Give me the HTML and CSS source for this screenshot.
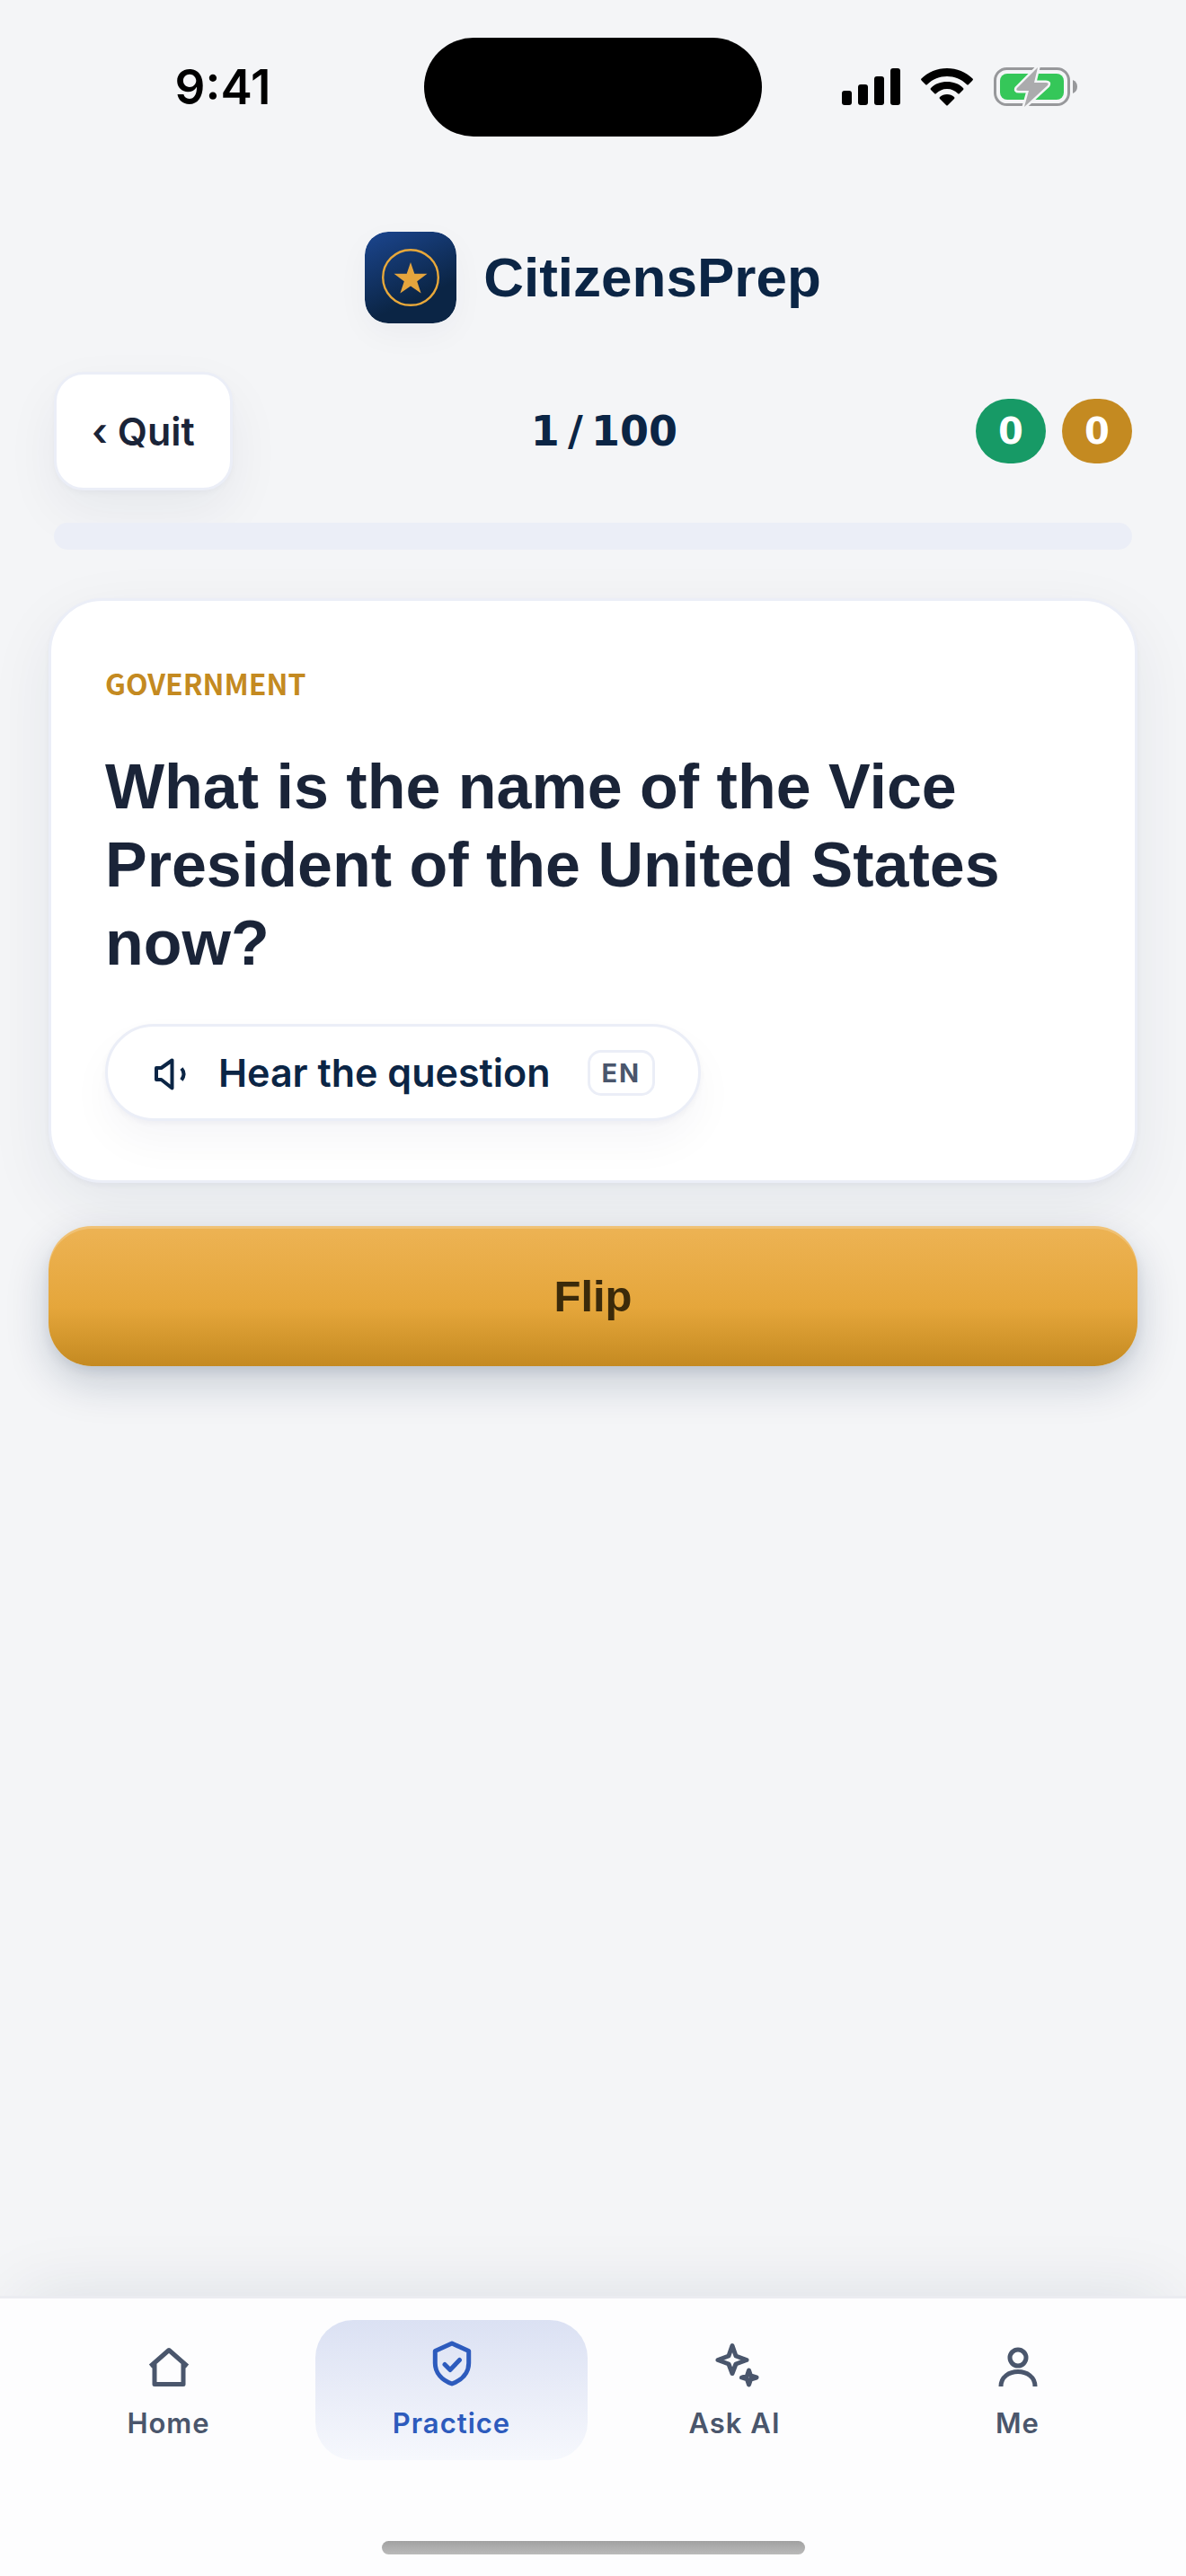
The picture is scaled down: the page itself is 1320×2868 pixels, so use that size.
FILE: index.html
```html
<!DOCTYPE html>
<html lang="en">
<head>
<meta charset="utf-8">
<meta name="viewport" content="width=device-width, initial-scale=1">
<title>CitizensPrep</title>
<link rel="stylesheet" href="styles.css">
</head>
<body>
<div class="status">
  <span class="status-time">9:41</span>
  <span class="island"></span>
  <div class="status-icons">
    <svg width="65" height="42" viewBox="0 0 65 42"><rect x="0" y="25" width="11" height="16" rx="3"/><rect x="18" y="18" width="11" height="23" rx="3"/><rect x="36" y="9" width="11" height="32" rx="3"/><rect x="54" y="0" width="11" height="41" rx="3"/></svg>
    <svg width="58" height="42" viewBox="0 0 58 42"><path d="M29 0C40 0 50 4 58 12Q58 13 57 14L53 18Q52 19 51 18C45 12 37 9 29 9S13 12 7 18Q6 19 5 18L1 14Q0 13 0 12C8 4 18 0 29 0Z"/><path d="M29 15C36 15 42 17 47 22Q48 23 47 24L43 28Q42 29 41 28C38 25 34 23 29 23S20 25 17 28Q16 29 15 28L11 24Q10 23 11 22C16 17 22 15 29 15Z"/><path d="M29 29C32 29 35 30 37 32Q38 33 37 34L30 41Q29 42 28 41L21 34Q20 33 21 32C23 30 26 29 29 29Z"/></svg>
    <svg width="94" height="46" viewBox="0 0 94 46"><rect x="1.500" y="2.500" width="82" height="40" rx="13" fill="none" stroke="#97989b" stroke-width="3"/><rect x="7" y="8" width="71" height="29" rx="8" fill="#35c759"/><path d="M88 15q5 2 5 7.500t-5 7.500z" fill="#97989b"/><path d="M49 1L26 24q-2 3 2 3h11l-5 18L60 21q2-3-2-3H45z" fill="#ababad" stroke="#f4f5f7" stroke-width="5" paint-order="stroke"/></svg>
  </div>
</div>

<main class="screen">
  <header class="brand">
    <svg class="brand-mark" viewBox="0 0 102 102">
      <defs><linearGradient id="navy" x1="0.200" y1="0" x2="0.650" y2="1"><stop offset="0" stop-color="#1a4389"/><stop offset="0.750" stop-color="#0b2545"/></linearGradient></defs>
      <rect width="102" height="102" rx="26" fill="url(#navy)"/>
      <circle cx="51" cy="51" r="30.800" fill="none" stroke="#e8a83a" stroke-width="2.400"/>
      <path d="M51 34l4.300 12.700H69.500L58.200 55.200l4.400 13.300L51 60.500 39.400 68.500l4.400-13.300L32.500 46.700H46.700z" fill="#e5a53d"/>
    </svg>
    <span class="brand-name">CitizensPrep</span>
  </header>

  <div class="session">
    <button class="quit" type="button">‹ Quit</button>
    <span class="count">1&thinsp;/&thinsp;100</span>
    <div class="scores"><span class="score score-right">0</span><span class="score score-review">0</span></div>
  </div>
  <div class="progress" role="progressbar" aria-label="Questions answered" aria-valuenow="0" aria-valuemin="0" aria-valuemax="100"></div>

  <section class="card">
    <p class="topic">GOVERNMENT</p>
    <h1 class="question">What is the name of the Vice President of the United States now?</h1>
    <button class="hear" type="button">
      <svg width="48" height="48" viewBox="0 0 48 48" fill="none" stroke="currentColor" stroke-width="4" stroke-linejoin="round"><path d="M6 19h5.500L23.500 10.500v31L11.500 32H6z"/><path d="M34 19.500q5 6 0 13"/></svg>
      <span>Hear the question</span>
      <span class="lang">EN</span>
    </button>
  </section>

  <button class="flip" type="button">Flip</button>
</main>

<nav class="tabs">
  <div class="tab-row">
    <a class="tab" href="#home"><svg viewBox="0 0 60 60"><path d="M9.500 33.500L30 15.500l20.500 18M14 30v23.500h32V30"/></svg>Home</a>
    <a class="tab tab-active" href="#practice" aria-current="page"><svg viewBox="0 0 60 60"><path d="M30 8l18.700 8.500V30C48.700 41 41 49 30 53 19 49 11.300 41 11.300 30V16.500z"/><path d="M22 31.500l6 6L38.500 26.500"/></svg>Practice</a>
    <a class="tab" href="#ask"><svg viewBox="0 0 60 60"><path d="M27 10.500l4 11.500 12 4.500-12 4.500-4 10.500-4-10.500-12-4.500 12-4.500z"/><path d="M45.500 38l2 6 6.500 2-6.500 2-2 6-2-6-6-2 6-2z"/></svg>Ask AI</a>
    <a class="tab" href="#me"><svg viewBox="0 0 60 60"><circle cx="30" cy="24" r="9"/><path d="M11 56C11 34 49 34 49 56"/></svg>Me</a>
  </div>
  <div class="home-bar"></div>
</nav>
</body>
</html>
```
FILE: styles.css
```css
:root {
  --bg: #f4f5f7;
  --line: #ebeef7;
  --navy: #0b2545;
  --ink: #1a2438;
  --muted: #4a566c;
  --gold: #c48a21;
  --ui: Inter, "Liberation Sans", sans-serif;
  --display: "Liberation Sans", Arial, sans-serif;
  --label: "Noto Sans CJK SC", "Noto Sans", sans-serif;
  --digits: "DejaVu Sans", sans-serif;
}

* { box-sizing: border-box; }

body {
  margin: 0;
  min-height: 100vh;
  display: flex;
  flex-direction: column;
  background: var(--bg);
  color: var(--ink);
  font-family: var(--ui);
}

button { font: inherit; color: inherit; cursor: pointer; }

/* Status bar */
.status {
  display: grid;
  grid-template-columns: 1fr 376px 1fr;
  align-items: center;
  padding-top: 42px;
}
.status-time {
  padding-left: 24px;
  text-align: center;
  font-size: 53px;
  line-height: 60px;
  font-weight: 600;
  color: #000;
}
.island { height: 110px; border-radius: 56px; background: #000; }
.status-icons {
  display: flex;
  align-items: center;
  justify-content: center;
  gap: 23px;
  padding-right: 32px;
}

/* Page */
.screen {
  flex: 1;
  display: flex;
  flex-direction: column;
  padding: 106px 54px 0;
}

.brand {
  display: flex;
  align-items: center;
  justify-content: center;
  gap: 30px;
}
.brand-mark {
  width: 102px;
  height: 102px;
  border-radius: 26px;
  box-shadow: 0 12px 36px rgba(11, 37, 69, 0.04);
}
.brand-name {
  font-family: var(--display);
  font-size: 62px;
  line-height: 72px;
  font-weight: 700;
  color: var(--navy);
}

.session {
  display: flex;
  align-items: center;
  justify-content: space-between;
  margin: 54px 6px 0;
}
.quit {
  height: 132px;
  padding: 0 39px;
  border: 3px solid var(--line);
  border-radius: 33px;
  background: #fff;
  font-size: 43px;
  line-height: 48px;
  font-weight: 600;
  box-shadow: 0 3px 6px rgba(11, 37, 69, 0.03), 0 24px 60px rgba(11, 37, 69, 0.06);
}
.count {
  font-family: var(--digits);
  font-size: 46px;
  line-height: 60px;
  font-weight: 700;
  color: var(--navy);
}
.scores { display: flex; gap: 18px; }
.score {
  width: 78px;
  height: 72px;
  border-radius: 36px;
  text-align: center;
  font-family: var(--digits);
  font-size: 40px;
  line-height: 72px;
  font-weight: 700;
  color: #fff;
}
.score-right { background: #179a66; }
.score-review { background: var(--gold); }

.progress {
  height: 30px;
  margin: 36px 6px 0;
  border-radius: 15px;
  background: var(--line);
}

.card {
  margin-top: 54px;
  padding: 65px 60px 66px;
  border: 3px solid var(--line);
  border-radius: 60px;
  background: #fff;
  box-shadow: 0 3px 6px rgba(11, 37, 69, 0.04), 0 24px 72px rgba(11, 37, 69, 0.07);
}
.topic {
  margin: 0;
  font-family: var(--label);
  font-size: 32px;
  line-height: 52px;
  font-weight: 700;
  color: var(--gold);
}
.question {
  margin: 47px 0 0;
  font-family: var(--display);
  font-size: 70px;
  line-height: 87px;
  font-weight: 700;
}
.hear {
  display: inline-flex;
  align-items: center;
  height: 108px;
  margin-top: 46px;
  padding: 0 48px;
  border: 3px solid var(--line);
  border-radius: 54px;
  background: #fff;
  color: var(--navy);
  font-size: 43px;
  line-height: 48px;
  font-weight: 600;
  box-shadow: 0 3px 6px rgba(11, 37, 69, 0.04), 0 24px 48px rgba(11, 37, 69, 0.04);
}
.hear svg { margin-right: 27px; }
.lang {
  margin-left: 41px;
  padding: 0 13px;
  border: 3px solid var(--line);
  border-radius: 15px;
  font-size: 29px;
  line-height: 45px;
  font-weight: 700;
  letter-spacing: 2px;
  color: var(--muted);
}

.flip {
  height: 156px;
  margin-top: 48px;
  border: 0;
  border-radius: 48px;
  background: linear-gradient(#edb354, #e5a63b 58%, #c48a21);
  color: #3b2a0a;
  font-family: var(--display);
  font-size: 49px;
  line-height: 60px;
  font-weight: 700;
  box-shadow: inset 0 3px 0 rgba(255, 255, 255, 0.2), 0 6px 12px rgba(11, 37, 69, 0.08), 0 18px 48px rgba(11, 37, 69, 0.2);
}

/* Tab bar */
.tabs {
  padding: 24px 36px;
  border-top: 3px solid #ebecf1;
  background: #fdfdfe;
  box-shadow: 0 -24px 72px -24px rgba(11, 37, 69, 0.1);
}
.tab-row {
  display: grid;
  grid-template-columns: repeat(4, 1fr);
  gap: 12px;
}
.tab {
  display: flex;
  flex-direction: column;
  align-items: center;
  gap: 18px;
  height: 156px;
  padding-top: 18px;
  border-radius: 42px;
  color: var(--muted);
  font-size: 31px;
  line-height: 38px;
  font-weight: 600;
  letter-spacing: 1px;
  text-decoration: none;
}
.tab svg {
  width: 60px;
  height: 60px;
  fill: none;
  stroke: currentColor;
  stroke-width: 5;
  stroke-linejoin: round;
}
.tab-active {
  background: linear-gradient(#dbe1f3, #eceff9 62%, #f6f8fd);
  color: #2d5bbd;
}
.tab-active svg { stroke-linecap: round; }
.home-bar {
  width: 471px;
  height: 15px;
  margin: 90px auto 0;
  border-radius: 8px;
  background: linear-gradient(#a1a1a1, #bababa);
}
```
